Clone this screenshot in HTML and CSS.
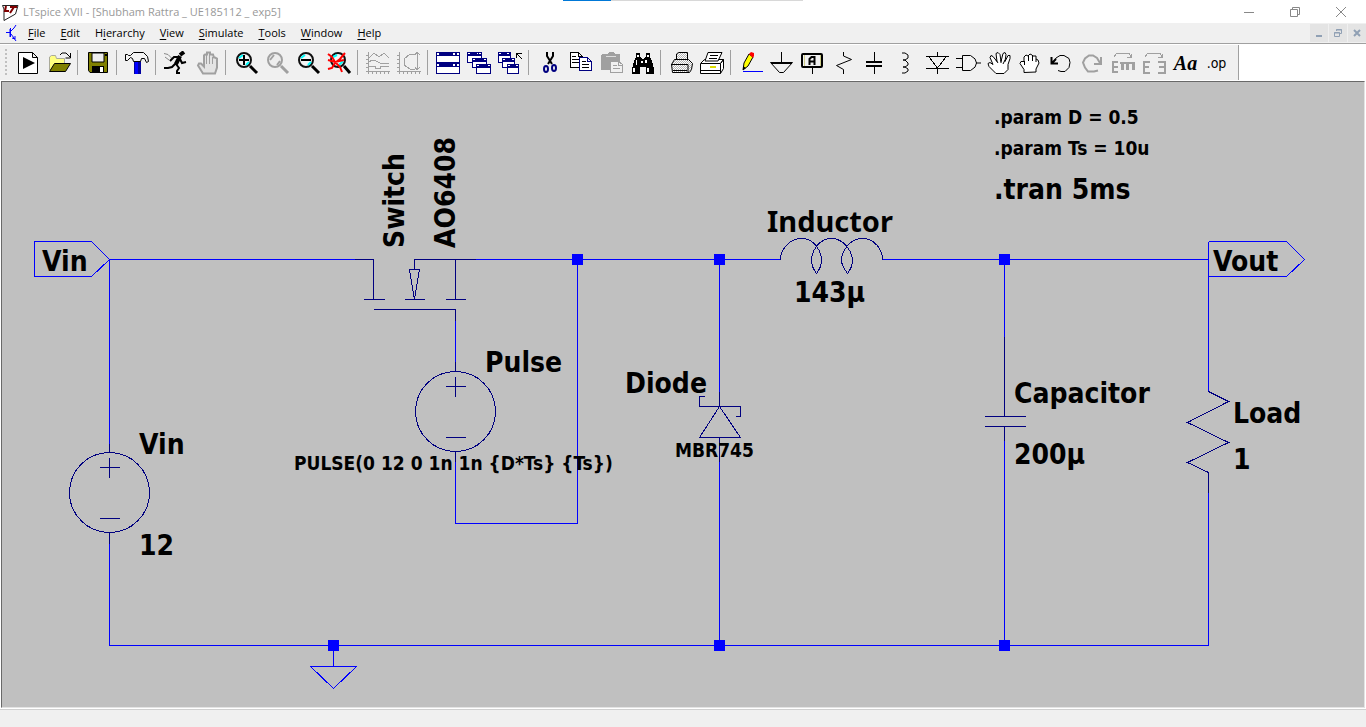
FILE: index.html
```html
<!DOCTYPE html>
<html lang="en">
<head>
<meta charset="utf-8">
<title>LTspice XVII - [Shubham Rattra _ UE185112 _ exp5]</title>
<link rel="stylesheet" href="styles.css">
</head>
<body>
<div class="app">
  <header class="titlebar">
    <svg class="logo" width="18" height="20" viewBox="0 0 18 20"><path d="M1.500 3.500H17L14.500 12L3 18.500V7Z" fill="#fff" stroke="#222"/><path d="M5 4L4 9H8M9 5H16M13 5L9 11" fill="none" stroke="#800000" stroke-width="2"/></svg>
    <h1 class="title">LTspice XVII - [Shubham Rattra _ UE185112 _ exp5]</h1>
    <div class="loading"><i></i></div>
    <div class="winbtns">
      <button type="button" aria-label="Minimize"><svg width="12" height="12"><path d="M1 6.500h10"/></svg></button>
      <button type="button" aria-label="Restore"><svg width="12" height="12"><path d="M1.500 3.500h7v7h-7zM3.500 3V1.500h7v7H9"/></svg></button>
      <button type="button" aria-label="Close"><svg width="12" height="12"><path d="M1 1l10 10M11 1L1 11"/></svg></button>
    </div>
  </header>

  <nav class="menubar">
    <svg class="docicon" width="14" height="18" viewBox="0 0 14 18" fill="none" stroke="#00f"><path d="M1 8.500h4M5.500 4v9M6 7l3-3 2-3M6 10l3 4 2 3" stroke-width="1"/><path d="M5 5v8M7 14l3 1v-3" stroke-width="1"/></svg>
    <button type="button"><u>F</u>ile</button>
    <button type="button"><u>E</u>dit</button>
    <button type="button">H<u>i</u>erarchy</button>
    <button type="button"><u>V</u>iew</button>
    <button type="button"><u>S</u>imulate</button>
    <button type="button"><u>T</u>ools</button>
    <button type="button"><u>W</u>indow</button>
    <button type="button"><u>H</u>elp</button>
    <div class="docbtns">
      <button type="button" aria-label="Minimize document"><svg width="10" height="10"><path d="M2 8h6" stroke-width="2"/></svg></button>
      <button type="button" aria-label="Restore document"><svg width="10" height="10"><path d="M1.500 4.500h5v4h-5zM1 5h6M3.500 3V1.500h5v4H7M3 2h6"/></svg></button>
      <button type="button" aria-label="Close document"><svg width="10" height="10"><path d="M2 2l6 6M8 2L2 8" stroke-width="2"/></svg></button>
    </div>
  </nav>

  <div class="toolrow">
  <div class="toolbar" role="toolbar" aria-label="Main toolbar">
    <span class="grip"></span>
    <button type="button" aria-label="New schematic"><svg viewBox="0 0 31 24"><path d="M5.500 1.500h14l5 5v16h-19zM19.500 1.500v5h5" fill="#fff" stroke="#000"/><path d="M10 6v12l12-6z"/></svg></button>
    <button type="button" aria-label="Open"><svg viewBox="0 0 31 24"><path d="M5.500 19V6l2-1.500h4l1 3h8V12" fill="#ffff80" stroke="#aa9" /><path d="M5.500 20.500l5-8h16l-5 8z" fill="#808000" stroke="#000"/><path d="M16 4l2-2h4l4 4M26.500 2v5h-5" fill="none" stroke="#000"/></svg></button>
    <span class="sep"></span>
    <button type="button" aria-label="Save"><svg viewBox="0 0 31 24"><path d="M5.500 1.500h19v20H7l-1.500-2z" fill="#808000" stroke="#000"/><path d="M9 2h12v9H9z" fill="#eee" stroke="#000"/><path d="M9 15h12v6H9zM22 3h2v2h-2z"/><path d="M17 16h3v5h-3z" fill="#fff"/></svg></button>
    <span class="sep"></span>
    <button type="button" aria-label="Control panel"><svg viewBox="0 0 31 24"><path d="M12 10h7v13h-7z" fill="#0000a0"/><path d="M13 10h3v13h-3z" fill="#00f"/><path d="M3.500 3.500h2l1 1h2l3-3h10l4 4 1 5-2 1-2-4h-3l-1 3h-7l-1-3-2-1-3 3h-2z" fill="#f4f4f4" stroke="#000"/></svg></button>
    <span class="sep"></span>
    <button type="button" aria-label="Run"><svg viewBox="0 0 31 24" fill="none" stroke="#000"><path d="M3 2.500l4 1 4 4M4 6l4 3" stroke="#888"/><path d="M23 1l-4 3" stroke-width="4"/><path d="M19 5l-4 8" stroke-width="4"/><path d="M18 6h-5l-4 4M19 8l2 4 4-1M15 12l-4 4-4 1H3M15 13l3 4-2 3v2h3" stroke-width="2"/></svg></button>
    <button type="button" aria-label="Halt" disabled><svg viewBox="0 0 31 24"><path d="M11 22.500l-5-8 1-2h2l3 3V4.500l1-1h2v-2h3v2h3l1 3h1l2 1v9l-2 6z" fill="#e4e4e4" stroke="#a0a0a0" stroke-width="2"/><path d="M14.500 4v9M17.500 4v9M20.500 6v7" stroke="#a0a0a0"/></svg></button>
    <span class="sep"></span>
    <button type="button" aria-label="Zoom in"><svg viewBox="0 0 31 24"><circle cx="13" cy="9" r="7" fill="#f4f4f4" stroke="#111" stroke-width="2"/><path d="M8 7l4-3M15 14l3-3" stroke="#0ff" stroke-width="2"/><path d="M8 9h10M13 4v10" stroke="#000" stroke-width="2"/><path d="M19 15l7 7" stroke="#000" stroke-width="3"/></svg></button>
    <button type="button" aria-label="Zoom back" disabled><svg viewBox="0 0 31 24"><circle cx="13" cy="9" r="7" fill="#eee" stroke="#a0a0a0" stroke-width="2"/><path d="M8 9l4-5M15 14l3-4" stroke="#a0a0a0" stroke-width="2"/><path d="M19 15l7 7" stroke="#a0a0a0" stroke-width="3"/></svg></button>
    <button type="button" aria-label="Zoom out"><svg viewBox="0 0 31 24"><circle cx="13" cy="9" r="7" fill="#f4f4f4" stroke="#111" stroke-width="2"/><path d="M8 7l4-3M15 14l3-3" stroke="#0ff" stroke-width="2"/><path d="M8 9h10" stroke="#000" stroke-width="2"/><path d="M19 15l7 7" stroke="#000" stroke-width="3"/></svg></button>
    <button type="button" aria-label="Zoom to fit"><svg viewBox="0 0 31 24"><circle cx="14" cy="9" r="7" fill="#f4f4f4" stroke="#111" stroke-width="2"/><path d="M9 6l4-2M15 14l4-4" stroke="#0ff" stroke-width="2"/><path d="M20 15l6 7" stroke="#000" stroke-width="3"/><path d="M4 3l4 3 3 5 5 5 2 5M21 2l-5 6-5 4-3 5-4 1M4 9l7 2 9-2" fill="none" stroke="red" stroke-width="2"/></svg></button>
    <span class="sep"></span>
    <button type="button" aria-label="Autorange" disabled><svg class="crisp" viewBox="0 0 31 24" fill="none" stroke="#a0a0a0"><path d="M5.500 1v22M3 20.500h24M3 4.500h2M3 8.500h2M3 12.500h2M3 16.500h2M9.500 20v3M13.500 20v3M17.500 20v3M21.500 20v3M25.500 20v3M6 7l5-5 5 4 5-4 5 5M6 11l3-2 4 1 4 2h9M6 15h6v2h5v-2h9"/></svg></button>
    <button type="button" aria-label="Plot settings" disabled><svg class="crisp" viewBox="0 0 31 24" fill="none" stroke="#a0a0a0"><path d="M5.500 1v22M3 20.500h24M3 4.500h2M3 8.500h2M3 12.500h2M3 16.500h2M9.500 20v3M13.500 20v3M17.500 20v3M21.500 20v3M25.500 20v3M21 3h-5l-6 5v6l6 4h5M23.500 1v18M21 4l2-3 3 3M21 16l2 3 3-3"/></svg></button>
    <span class="sep"></span>
    <button type="button" aria-label="Tile windows"><svg class="crisp" viewBox="0 0 31 24"><path d="M3.500 1.500h23v10h-23zM3.500 12.500h23v10h-23z" fill="#fff" stroke="#000080"/><path d="M3 1h24v4H3zM3 11h24v5H3z" fill="#000080"/><path d="M4 2h2v2H4zM20 2h2v2h-2zM24 2h2v2h-2zM4 13h2v2H4zM20 13h2v2h-2zM24 13h2v2h-2z" fill="#fff"/></svg></button>
    <button type="button" aria-label="Cascade windows"><svg class="crisp" viewBox="0 0 31 24"><g fill="#fff" stroke="#000080"><path d="M3.500 1.500h14v10h-14z"/><path d="M4 3h13" stroke-width="3"/><path d="M8.500 7.500h14v9h-14z"/><path d="M9 9h13" stroke-width="3"/><path d="M12.500 13.500h14v9h-14z"/><path d="M13 15h13" stroke-width="3"/></g><path d="M4 2h2v1H4zM13 2h1v1h-1zM15 2h2v1h-2zM9 8h2v1H9zM20 8h2v1h-2zM13 14h2v1h-2zM24 14h2v1h-2z" fill="#fff"/></svg></button>
    <button type="button" aria-label="Close all windows"><svg class="crisp" viewBox="0 0 31 24"><g fill="#fff" stroke="#000080"><path d="M3.500 1.500h12v10h-12z"/><path d="M4 3h11" stroke-width="3"/><path d="M7.500 7.500h12v9h-12z"/><path d="M8 9h11" stroke-width="3"/><path d="M12.500 13.500h11v9h-11z"/><path d="M13 15h10" stroke-width="3"/></g><path d="M4 2h2v1H4zM12 2h2v1h-2zM8 8h2v1H8zM17 8h2v1h-2zM13 14h2v1h-2zM21 14h2v1h-2z" fill="#fff"/><path d="M21.500 7V2.500H27M22 3l5 5" stroke="#000" fill="none"/></svg></button>
    <span class="sep"></span>
    <button type="button" aria-label="Cut"><svg viewBox="0 0 31 24" fill="none" stroke="#000" stroke-width="2"><path d="M13 1v4l5 8M19 1v4l-5 8"/><ellipse cx="12" cy="18" rx="2" ry="3" stroke="#000080"/><ellipse cx="20" cy="17" rx="2" ry="3" stroke="#000080"/></svg></button>
    <button type="button" aria-label="Copy"><svg class="crisp" viewBox="0 0 31 24"><path d="M5.500 1.500h8l4 4v11h-12zM13.500 1.500v4h4" fill="#fff" stroke="#000"/><path d="M7 5.500h4M7 8.500h7M7 11.500h7" stroke="#000"/><path d="M14.500 6.500h8l4 4v9h-12zM22.500 6.500v4h4" fill="#fff" stroke="#000080"/><path d="M17 10.500h4M17 13.500h7M17 16.500h7" stroke="#000"/></svg></button>
    <button type="button" aria-label="Paste" disabled><svg class="crisp" viewBox="0 0 31 24"><path d="M6 3h5l2-2h4l2 2h5v16H5V4z" fill="#a0a0a0"/><path d="M10 5.500h10" stroke="#ddd"/><path d="M14.500 10.500h8l4 3v8h-12z" fill="#f0f0f0" stroke="#a0a0a0"/><path d="M17 14.500h4M17 17.500h7M22.500 10v4h4" stroke="#a0a0a0" fill="none"/></svg></button>
    <button type="button" aria-label="Find"><svg class="crisp" viewBox="0 0 31 24"><path d="M9 2h4v3l2 3h2l2-3V2h4v4l2 4 2 8v5h-8v-7h-6v7H5v-5l2-8 2-4z"/><path d="M10 4h2v2h-2zM20 4h2v2h-2zM9 9h1v5H9zM18 9h2v3h-2zM6 17h2v4H6zM20 17h2v4h-2zM14 10h2v2h-2z" fill="#fff"/></svg></button>
    <span class="sep"></span>
    <button type="button" aria-label="Print"><svg viewBox="0 0 31 24"><defs><pattern id="dither" width="2" height="2" patternUnits="userSpaceOnUse"><path d="M0 0h2v2H0z" fill="#fff"/><path d="M0 0h1v1H0zM1 1h1v1H1z" fill="#b4b4b4"/></pattern></defs><path d="M10.500 9V3l2-1.500h9v8M8.500 8.500h14l4 4-1 6-2 3H6.500l-1-8z" fill="url(#dither)" stroke="#000"/><path d="M5 13.500h17v8" fill="none" stroke="#000"/><path d="M7 19.500h14" stroke="#000"/></svg></button>
    <button type="button" aria-label="Page setup"><svg viewBox="0 0 31 24"><path d="M3.500 12.500l4-4h19l-3 4v10h-20zM23.500 12.500l3-4v9l-3 5" fill="#fff" stroke="#000"/><path d="M8 10l3-8.500h14L21 10z" fill="#fff" stroke="#000"/><path d="M13 4.500h8M12 7.500h8M4 12.500h19M4 19.500h19" stroke="#000"/><path d="M13 15h6v2h-6z" fill="#dd0"/></svg></button>
    <span class="sep"></span>
    <button type="button" aria-label="Wire"><svg viewBox="0 0 31 24"><path d="M7 19l1-7 5-9 4 3-5 9z" fill="#ff0" stroke="#000"/><path d="M13 3l2-2 3 1v3l-1 2z" fill="red"/><path d="M7 19v-4l3 2z" fill="#000"/><path d="M7 20.500h20" stroke="#00f"/></svg></button>
    <button type="button" aria-label="Ground"><svg viewBox="0 0 31 24" fill="none" stroke="#000"><path d="M14.500 1v11M3.500 11.500h22l-9 10h-4z"/><path d="M4 12h21" stroke-width="2"/></svg></button>
    <button type="button" aria-label="Label net"><svg viewBox="0 0 31 24" fill="none" stroke="#000"><rect x="4" y="3" width="20" height="13" rx="1" stroke-width="2"/><path d="M6.500 4v11M22.500 4v11" stroke="#cc8"/><path d="M14.500 16v7"/><path d="M11.500 14V8l2-2h3v8M12 10.500h4" stroke-width="2"/></svg></button>
    <button type="button" aria-label="Resistor"><svg viewBox="0 0 31 24" fill="none" stroke="#000"><path d="M14.500 1v4l8 3.500-15 6 7 4V23"/></svg></button>
    <button type="button" aria-label="Capacitor"><svg class="crisp" viewBox="0 0 31 24" stroke="#000" stroke-width="2"><path d="M14.500 1v9M14.500 15v8" stroke-width="1"/><path d="M6 11h16M6 15h16"/></svg></button>
    <button type="button" aria-label="Inductor"><svg viewBox="0 0 31 24" fill="none" stroke="#000"><path d="M11 2h3l3 2v3l-3 2h-2 2l3 3v2l-3 2h-2 2l3 2v2l-3 2h-3"/></svg></button>
    <button type="button" aria-label="Diode"><svg class="crisp" viewBox="0 0 31 24" fill="none" stroke="#000"><path d="M15.500 1v5M15.500 17v6M4 5.500h23M4 17.500h23M7 6l8.500 11L24 6"/></svg></button>
    <button type="button" aria-label="Component"><svg viewBox="0 0 31 24" fill="none" stroke="#000"><path d="M9.500 4.500h8q6 3 6 7.500t-6 7.500h-8z" fill="#f4f4f4"/><path d="M3 7.500h6M3 16.500h6M23 12h5"/></svg></button>
    <button type="button" aria-label="Move"><svg viewBox="0 0 31 24"><path d="M12 22.500l-7-7-1-3 2-1 3 2-3-7 1-2 2 1 4 5-1-8 2-1 2 2 1 7 2-8 2-1 1 2-1 7 3-6h2v3l-2 6v5l-4 4z" fill="#fff" stroke="#000"/><path d="M12 9l2 3M17 9v3M21 9l-2 4" stroke="#000"/></svg></button>
    <button type="button" aria-label="Drag"><svg viewBox="0 0 31 24"><path d="M9 21.500v-3l-4-6 1-2h3V6l2-2 2 1 2-2 2 1 1 1h3v3l2 1 1 3-3 6v3z" fill="#fff" stroke="#000"/><path d="M9.500 10v4M13.500 5v5M17.500 5v5M21 8v3" stroke="#000"/></svg></button>
    <button type="button" aria-label="Undo"><svg viewBox="0 0 31 24" fill="none" stroke="#000"><path d="M7 12l3-5 4-2.500h4l5 3 1 4-1 5-4 4h-4l-3-1"/><path d="M5.500 6v6.500H12M6 12l4-4" stroke-width="2"/></svg></button>
    <button type="button" aria-label="Redo" disabled><svg viewBox="0 0 31 24" fill="none" stroke="#a0a0a0"><path d="M23 12l-3-5-4-2.500h-4l-4 3-2 4 2 5 3 4h6l4-1" stroke-width="2"/><path d="M24 6v7h-7" stroke-width="2"/></svg></button>
    <button type="button" aria-label="Mirror" disabled><svg class="crisp" viewBox="0 0 31 24" fill="none" stroke="#a0a0a0"><path d="M6 6l3-4h12l2 4M19 6.500h4.500V3"/><path d="M10 11H5v10h5M5 16h5M12 12h15" stroke-width="2"/><path d="M14 12v7M19.500 12v7M25 12v7" stroke-width="3"/></svg></button>
    <button type="button" aria-label="Rotate" disabled><svg class="crisp" viewBox="0 0 31 24" fill="none" stroke="#a0a0a0"><path d="M6 6l3-4h12l2 4M19 6.500h4.500V3"/><path d="M11 11H5v11h6M5 16h5M19 11h7v11h-7M26 16h-6" stroke-width="2"/></svg></button>
    <button type="button" class="aa">Aa</button>
    <button type="button" class="op">.op</button>
  </div>
  </div>

  <main class="canvas">
    <svg class="sheet" role="img" aria-label="Buck converter schematic">
      <g transform="translate(-2 -82)">
      <g transform="translate(.5 .5)" fill="none" class="crisp">
        <g stroke="#00f">
          <path d="M34 241H91L109 259 91 276H34ZM109 259H354M109 259V443M109 543V645H1208V492M475 259H780M577 259V523H455V461M455 319V361M719 259V391M719 461V645M882 259H1208M1004 259V336M1004 440V645M1208 241H1286L1304 259 1286 276H1208M1208 241V391M333 645V666M310 666H356L333 688Z"/>
        </g>
        <g stroke="#000080">
          <path d="M354 259H373V299M363 299H384M373 309H455V320M475 259H414V269M404 299H424M409 269H419L414 299ZM455 259V299M445 299H465M455 361V371M455 451V461M445 386H465M455 376V396M445 437H465"/>
          <ellipse cx="455" cy="411" rx="40" ry="40"/>
          <ellipse cx="109" cy="492" rx="40" ry="40"/>
          <path d="M109 443V452M109 532V543M99 467H119M109 457V477M99 518H119"/>
          <path d="M719 391V406M719 437V461M704 396H699V406H740V416H735M719 406L699 437H740Z"/>
          <path d="M780 259C780 249 789 238 801 238C815 238 821 252 821 260C821 265 819 269 816 273C813 269 811 265 811 260C811 251 818 238 831 238C844 238 852 252 852 260C852 265 850 269 847 273C844 269 841 265 841 260C841 252 848 238 862 238C874 238 882 249 882 259"/>
          <path d="M1004 336V416M984 416H1025M984 426H1025M1004 426V440M1208 391L1228 401 1187 422 1228 442 1187 462 1208 472V492" />
        </g>
      </g>
      <g fill="#00f">
        <rect x="572" y="254" width="11" height="11"/><rect x="714" y="254" width="11" height="11"/><rect x="999" y="254" width="11" height="11"/>
        <rect x="328" y="640" width="11" height="11"/><rect x="714" y="640" width="11" height="11"/><rect x="999" y="640" width="11" height="11"/>
      </g>
      <g class="big">
        <text x="42" y="271">Vin</text>
        <text x="139" y="454">Vin</text>
        <text x="139" y="555">12</text>
        <text x="485" y="372">Pulse</text>
        <text x="625" y="393">Diode</text>
        <text class="serif-i" x="767" y="232">Inductor</text>
        <text x="794" y="302">143µ</text>
        <text x="994" y="199">.tran 5ms</text>
        <text x="1213" y="271">Vout</text>
        <text x="1014" y="403">Capacitor</text>
        <text x="1014" y="464">200µ</text>
        <text x="1233" y="423">Load</text>
        <text x="1233" y="469">1</text>
        <text transform="translate(404 248) rotate(-90)">Switch</text>
        <text transform="translate(455 248) rotate(-90)">AO6408</text>
      </g>
      <g class="small">
        <text x="994" y="124">.param D = 0.5</text>
        <text x="994" y="155">.param Ts = 10u</text>
        <text x="294" y="470">PULSE(0 12 0 1n 1n {D*Ts} {Ts})</text>
        <text x="675" y="457">MBR745</text>
      </g>
      </g>
    </svg>
  </main>
  <footer class="status"></footer>
</div>
</body>
</html>
```
FILE: styles.css
```css
* { box-sizing: border-box; }
body { margin: 0; font-family: "Open Sans", "Noto Sans", sans-serif; font-size: 11px; color: #000; background: #f0f0f0; }
button { border: 0; padding: 0; margin: 0; background: none; font: inherit; color: inherit; }
.app { display: flex; flex-direction: column; min-height: 100vh; }
.crisp { shape-rendering: crispEdges; }

.titlebar { position: relative; display: flex; align-items: center; height: 23px; background: #fff; padding-left: 1px; }
.logo { margin-right: 4px; }
.title { margin: 0; font-size: 11px; font-weight: 400; line-height: 22px; color: #999; white-space: nowrap; }
.loading { position: absolute; top: 0; left: 563px; width: 240px; height: 1px; background: #d8d8d8; }
.loading i { display: block; width: 48px; height: 1px; background: #0078d7; }
.winbtns { margin-left: auto; display: flex; padding-right: 2px; }
.winbtns button { width: 46px; height: 22px; display: grid; place-items: center; }
.winbtns svg, .docbtns svg { fill: none; stroke: #888; }

.menubar { display: flex; align-items: center; height: 21px; border-bottom: 1px solid #a0a0a0; padding-left: 5px; }
.docicon { margin-right: 9px; }
.menubar > button { margin-right: 15px; line-height: 18px; white-space: nowrap; }
.menubar u { text-underline-offset: 2px; }
.docbtns { margin-left: auto; display: flex; gap: 1px; }
.docbtns button { width: 18px; height: 18px; background: #e4e4e4; display: grid; place-items: center; }
.docbtns svg { stroke: #90a0b4; }

.toolrow { display: flex; height: 37px; background: #fff; border-top: 1px solid #fff; border-bottom: 1px solid #a0a0a0; }
.toolbar { display: flex; align-items: center; width: 1239px; background: #f0f0f0; border-right: 1px solid #a0a0a0; }
.toolbar button { flex: none; width: 31px; height: 24px; }
.toolbar svg { display: block; width: 31px; height: 24px; }
.grip { flex: none; width: 2px; height: 28px; margin: 0 6px 0 5px; background: repeating-linear-gradient(#c0c0c0 0 2px, #f0f0f0 2px 4px); }
.sep { flex: none; width: 8px; height: 25px; background: linear-gradient(#a0a0a0, #a0a0a0) 2px 0 / 1px 100% no-repeat; }
.toolbar .aa { font: italic 700 20px/24px "Liberation Serif", serif; }
.toolbar .op { font: 400 14px/20px "DejaVu Sans Condensed", "DejaVu Sans", sans-serif; }

.canvas { flex: 1; display: flex; background: #c0c0c0; border: 1px solid #696969; border-right-color: #e3e3e3; border-bottom-color: #e3e3e3; box-shadow: 0 0 0 1px #fff; margin: 0 1px 1px; }
.sheet { flex: 1; width: 100%; }
.big { font: 700 28px "DejaVu Sans Condensed", "Noto Sans", sans-serif; }
.big .serif-i { font: 700 29px "Noto Sans", sans-serif; }
.small { font: 700 19px "DejaVu Sans Condensed", "Noto Sans", sans-serif; }
.status { height: 18px; border-top: 1px solid #d0d0d0; }
```
